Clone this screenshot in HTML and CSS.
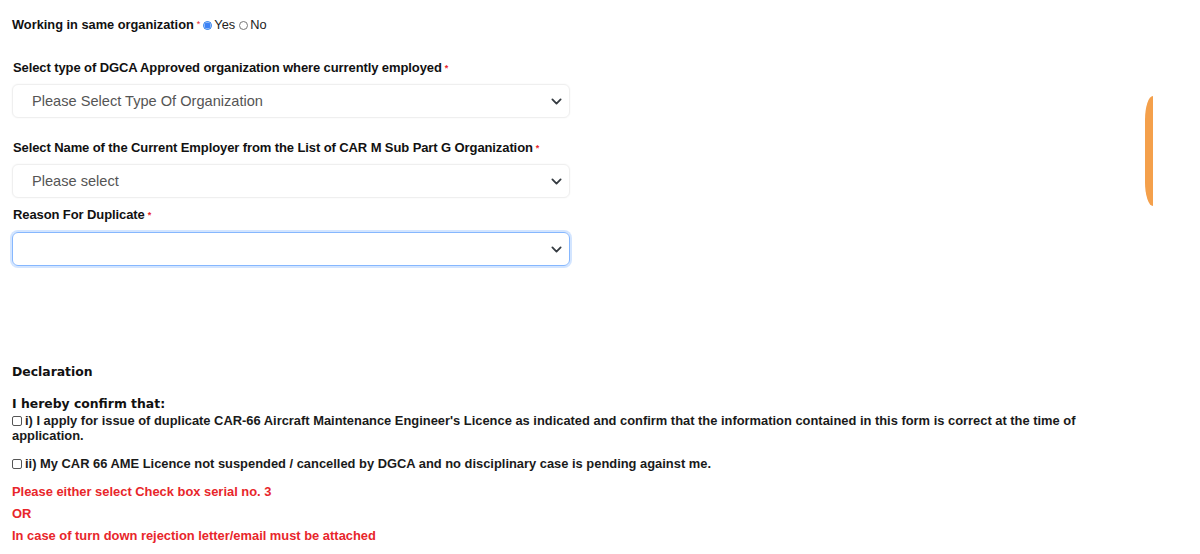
FILE: index.html
```html
<!DOCTYPE html>
<html>
<head>
<meta charset="utf-8">
<link rel="stylesheet" href="styles.css">
</head>
<body>
<div class="page">
  <div class="radio-row">
    <span class="lbl">Working in same organization</span><span class="req">*</span>
    <span class="radio checked"></span><span class="opt">Yes</span>
    <span class="radio"></span><span class="opt">No</span>
  </div>

  <div class="field first">
    <div class="flabel">Select type of DGCA Approved organization where currently employed<span class="req">*</span></div>
    <div class="select"><span class="ph">Please Select Type Of Organization</span><svg class="chev" viewBox="0 0 16 16"><path d="M2 5l6 6 6-6" fill="none" stroke="#343a40" stroke-width="2.6" stroke-linecap="round" stroke-linejoin="round"/></svg></div>
  </div>

  <div class="field">
    <div class="flabel">Select Name of the Current Employer from the List of CAR M Sub Part G Organization<span class="req">*</span></div>
    <div class="select"><span class="ph">Please select</span><svg class="chev" viewBox="0 0 16 16"><path d="M2 5l6 6 6-6" fill="none" stroke="#343a40" stroke-width="2.6" stroke-linecap="round" stroke-linejoin="round"/></svg></div>
  </div>

  <div class="field tight">
    <div class="flabel">Reason For Duplicate<span class="req">*</span></div>
    <div class="select focus"><span class="ph"></span><svg class="chev" viewBox="0 0 16 16"><path d="M2 5l6 6 6-6" fill="none" stroke="#343a40" stroke-width="2.6" stroke-linecap="round" stroke-linejoin="round"/></svg></div>
  </div>

  <div class="decl">
    <h4 class="decl-title">Declaration</h4>
    <h4 class="confirm">I hereby confirm that:</h4>
    <p class="item item1"><span class="cb"></span>i) I apply for issue of duplicate CAR-66 Aircraft Maintenance Engineer's Licence as indicated and confirm that the information contained in this form is correct at the time of application.</p>
    <p class="item item2"><span class="cb"></span>ii) My CAR 66 AME Licence not suspended / cancelled by DGCA and no disciplinary case is pending against me.</p>
    <p class="red r1">Please either select Check box serial no. 3</p>
    <p class="red r2">OR</p>
    <p class="red r3">In case of turn down rejection letter/email must be attached</p>
  </div>
</div>
<div class="side-tab"></div>
</body>
</html>
```

FILE: styles.css
```css
html, body {
  margin: 0;
  padding: 0;
  background: #fff;
}
body {
  font-family: "Liberation Sans", Arial, sans-serif;
  color: #111;
  font-size: 12.8px;
}
.page {
  padding: 18px 0 0 12px;
  width: 1080px;
}
.radio-row {
  display: flex;
  align-items: center;
  height: 14px;
  line-height: 14px;
}
.lbl {
  font-weight: bold;
}
.req {
  color: #e8262b;
  font-size: 9px;
  line-height: 0;
  margin-left: 3px;
  position: relative;
  top: -1px;
}
.radio {
  width: 9px;
  height: 9px;
  border: 1px solid #777;
  border-radius: 50%;
  margin: 0 2px 0 3px;
  box-sizing: border-box;
}
.radio.checked {
  border: 1px solid #1a73e8;
  background: radial-gradient(circle, #3b82f6 0 2.8px, #fff 3.3px);
}
.opt {
  color: #222;
  margin-right: 1px;
}
.field {
  margin-top: 23px;
}
.field.first {
  margin-top: 29px;
}
.field.tight {
  margin-top: 10px;
}
.flabel {
  font-weight: bold;
  font-size: 13px;
  line-height: 14px;
  height: 14px;
  padding-left: 1px;
  letter-spacing: -0.1px;
}
.select {
  margin-top: 9px;
  width: 558px;
  height: 34px;
  box-sizing: border-box;
  border: 1px solid #efefef;
  border-radius: 6px;
  box-shadow: 0 0 2px rgba(0,0,0,0.06);
  display: flex;
  align-items: center;
  padding: 0 7px 0 19px;
}
.field.tight .select {
  margin-top: 10px;
}
.select.focus {
  border: 1px solid #86b7fe;
  box-shadow: 0 0 0 2px rgba(13,110,253,0.18);
}
.ph {
  flex: 1;
  font-size: 14.6px;
  color: #555;
}
.chev {
  width: 11px;
  height: 11px;
}
.decl {
  margin-top: 99px;
}
.decl-title {
  margin: 0;
  font-family: "DejaVu Sans", Verdana, sans-serif;
  font-weight: bold;
  font-size: 12.4px;
  line-height: 14px;
}
.confirm {
  margin: 18px 0 0 0;
  font-family: "DejaVu Sans", Verdana, sans-serif;
  font-weight: bold;
  font-size: 12.4px;
  line-height: 14px;
}
.item {
  margin: 0;
  font-weight: bold;
  font-size: 12.9px;
  line-height: 15px;
  color: #1a1a1a;
}
.item1 {
  margin-top: 2px;
}
.item2 {
  margin-top: 13px;
}
.cb {
  display: inline-block;
  width: 10px;
  height: 10px;
  border: 1px solid #555;
  border-radius: 2px;
  box-sizing: border-box;
  margin-right: 3px;
  vertical-align: -1px;
}
.red {
  margin: 0;
  color: #e8262b;
  font-weight: bold;
  line-height: 14px;
  font-size: 12.9px;
}
.r1 { margin-top: 14px; }
.r2 { margin-top: 8px; }
.r3 { margin-top: 8px; }
.side-tab {
  position: absolute;
  left: 1145px;
  top: 96px;
  width: 8px;
  height: 110px;
  background: #f4a04b;
  border-radius: 8px 0 0 8px / 24px 0 0 24px;
}
```
